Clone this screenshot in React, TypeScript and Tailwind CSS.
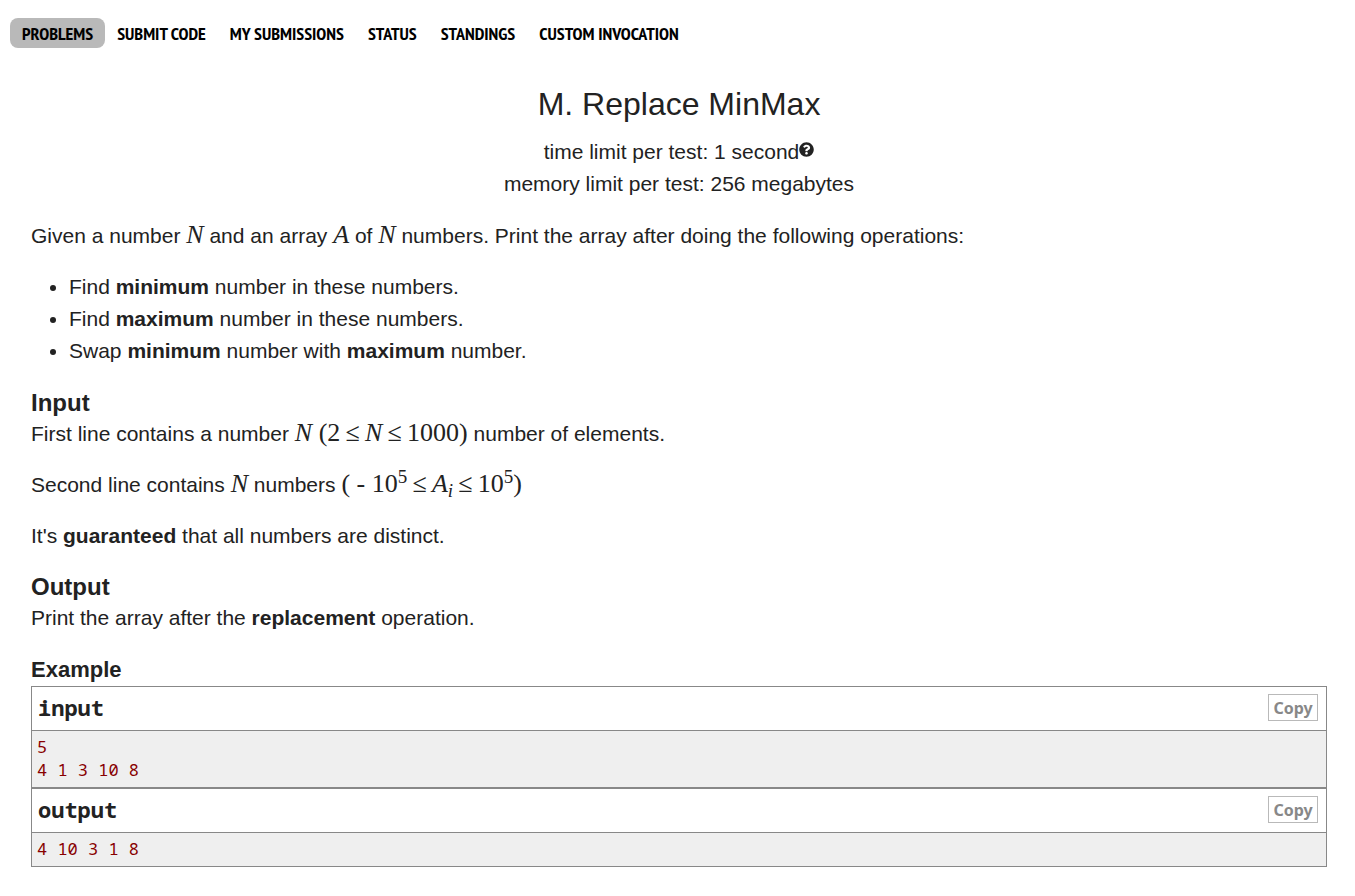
import type { ReactNode } from "react";
import { FaQuestionCircle } from "react-icons/fa";

const tabs = ["PROBLEMS", "SUBMIT CODE", "MY SUBMISSIONS", "STATUS", "STANDINGS", "CUSTOM INVOCATION"];

function Tex({ children }: { children: ReactNode }) {
  return (
    <span className="font-['Liberation_Serif',serif] text-[26px] leading-none whitespace-nowrap">{children}</span>
  );
}

function Power({ children }: { children: ReactNode }) {
  return <sup className="text-[19px] leading-none">{children}</sup>;
}

function LessOrEqual() {
  return <>&thinsp;≤&thinsp;</>;
}

function Sample({ title, data }: { title: string; data: string }) {
  return (
    <section className="border border-[#888]">
      <header className="flex h-11 items-center justify-between border-b border-[#888] pr-2 pb-[2px] pl-[6px]">
        <h3 className="font-['Noto_Sans_Mono','DejaVu_Sans_Mono',monospace] text-[22px] font-bold">{title}</h3>
        <button
          type="button"
          onClick={() => navigator.clipboard?.writeText(data)}
          className="flex h-[27px] w-[50px] items-center justify-center border border-[#b9b9b9] font-['Noto_Sans','Open_Sans',sans-serif] text-base leading-6 font-bold text-[#888]"
        >
          Copy
        </button>
      </header>
      <pre className="bg-[#efefef] px-[5px] pt-1 pb-[6px] font-['Noto_Sans_Mono','DejaVu_Sans_Mono',monospace] text-[17px] leading-[23px] text-[#880000]">
        {data}
      </pre>
    </section>
  );
}

export default function App() {
  return (
    <div className="bg-white pt-[18px] pb-7 font-['Liberation_Sans',Arial,sans-serif] text-[21px] leading-[31px] text-[#222]">
      <nav className="flex flex-wrap px-[10px] font-['PT_Sans_Narrow','Noto_Sans_CJK_SC',sans-serif] text-[18px] leading-7 font-bold text-black">
        {tabs.map((tab, index) => (
          <a
            key={tab}
            href="#"
            className={index === 0 ? "rounded-lg bg-[#b9b9b9] px-3 pt-[2px]" : "rounded-lg px-3 pt-[2px]"}
          >
            {tab}
          </a>
        ))}
      </nav>

      <main className="mr-7 ml-[31px]">
        <header className="pt-8 text-center leading-8">
          <h1 className="mb-2 text-[32px] leading-[48px]">M. Replace MinMax</h1>
          <p>
            time limit per test: 1 second
            <a href="#" aria-label="Time limit help" className="inline-block align-[2px]">
              <FaQuestionCircle className="size-[15px]" />
            </a>
          </p>
          <p>memory limit per test: 256 megabytes</p>
        </header>

        <p className="mt-5">
          Given a number <Tex><i>N</i></Tex> and an array <Tex><i>A</i></Tex> of <Tex><i>N</i></Tex> numbers. Print the
          array after doing the following operations:
        </p>
        <ul className="mt-5 list-disc pl-[38px] leading-8">
          <li>Find <b>minimum</b> number in these numbers.</li>
          <li>Find <b>maximum</b> number in these numbers.</li>
          <li>Swap <b>minimum</b> number with <b>maximum</b> number.</li>
        </ul>

        <h2 className="mt-5 text-2xl leading-[31px] font-bold">Input</h2>
        <p>
          First line contains a number{" "}
          <Tex>
            <i>N</i> (2<LessOrEqual /><i>N</i><LessOrEqual />1000)
          </Tex>{" "}
          number of elements.
        </p>
        <p className="mt-5">
          Second line contains <Tex><i>N</i></Tex> numbers{" "}
          <Tex>
            ( - 10<Power>5</Power><LessOrEqual /><i>A</i>
            <sub className="text-[19px] leading-none italic">i</sub><LessOrEqual />10<Power>5</Power>)
          </Tex>
        </p>
        <p className="mt-5">
          It's <b>guaranteed</b> that all numbers are distinct.
        </p>

        <h2 className="mt-5 text-2xl leading-[31px] font-bold">Output</h2>
        <p>
          Print the array after the <b>replacement</b> operation.
        </p>

        <h2 className="mt-[21px] text-[22px] leading-8 font-bold">Example</h2>
        <Sample title="input" data={"5\n4 1 3 10 8"} />
        <Sample title="output" data="4 10 3 1 8" />
      </main>
    </div>
  );
}
